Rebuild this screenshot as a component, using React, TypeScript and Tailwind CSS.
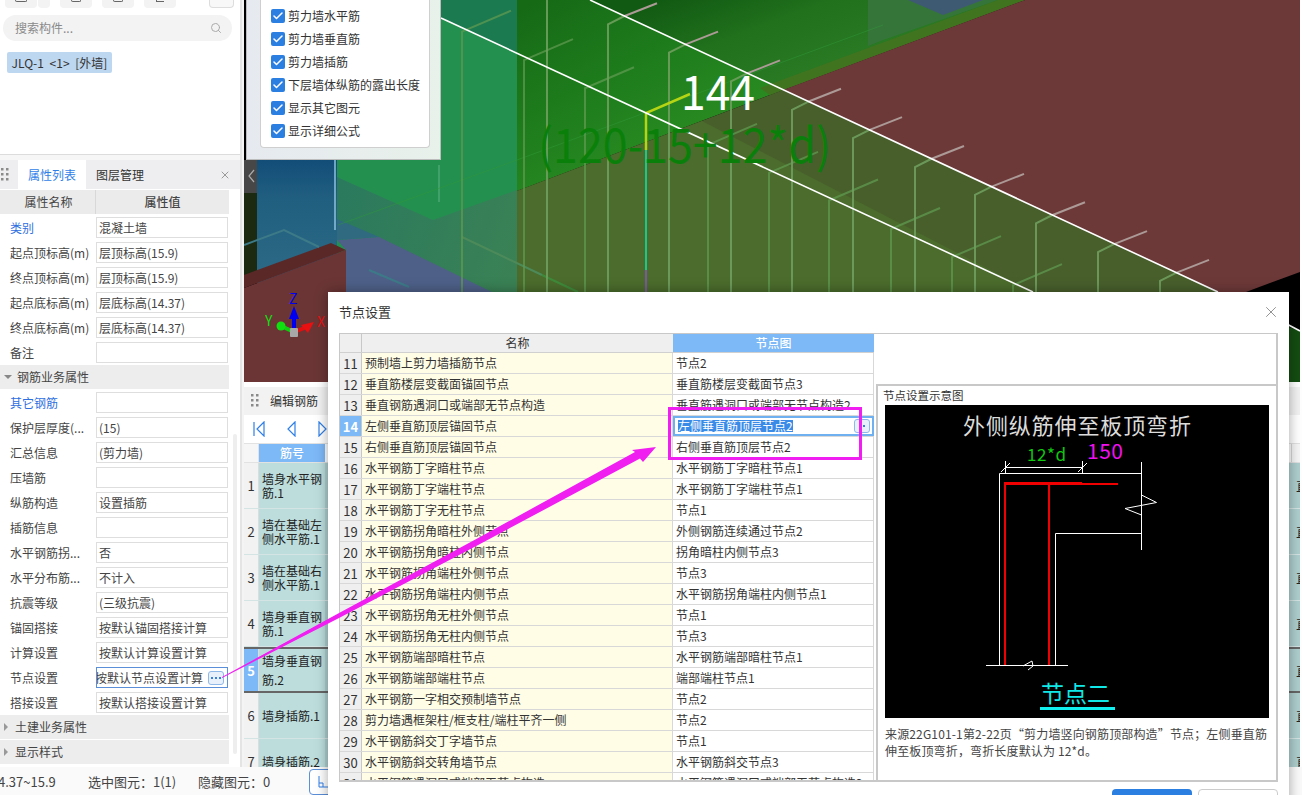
import { Check, Search, X } from "lucide-react";

const seriesA = [549, 610, 671, 733, 794, 855, 917, 977, 1038, 1100, 1162];
const seriesB = [464, 526, 587, 710, 771, 831, 893, 954, 1015];

const props: [string, string, boolean?][] = [
  ["类别", "混凝土墙", true],
  ["起点顶标高(m)", "层顶标高(15.9)"],
  ["终点顶标高(m)", "层顶标高(15.9)"],
  ["起点底标高(m)", "层底标高(14.37)"],
  ["终点底标高(m)", "层底标高(14.37)"],
  ["备注", ""],
];

const rebarProps: [string, string, boolean?][] = [
  ["其它钢筋", "", true],
  ["保护层厚度(...", "(15)"],
  ["汇总信息", "(剪力墙)"],
  ["压墙筋", ""],
  ["纵筋构造", "设置插筋"],
  ["插筋信息", ""],
  ["水平钢筋拐...", "否"],
  ["水平分布筋...", "不计入"],
  ["抗震等级", "(三级抗震)"],
  ["锚固搭接", "按默认锚固搭接计算"],
  ["计算设置", "按默认计算设置计算"],
];

const nodes: [number, string, string][] = [
  [11, "预制墙上剪力墙插筋节点", "节点2"],
  [12, "垂直筋楼层变截面锚固节点", "垂直筋楼层变截面节点3"],
  [13, "垂直钢筋遇洞口或端部无节点构造", "垂直筋遇洞口或端部无节点构造2"],
  [14, "左侧垂直筋顶层锚固节点", "左侧垂直筋顶层节点2"],
  [15, "右侧垂直筋顶层锚固节点", "右侧垂直筋顶层节点2"],
  [16, "水平钢筋丁字暗柱节点", "水平钢筋丁字暗柱节点1"],
  [17, "水平钢筋丁字端柱节点", "水平钢筋丁字端柱节点1"],
  [18, "水平钢筋丁字无柱节点", "节点1"],
  [19, "水平钢筋拐角暗柱外侧节点", "外侧钢筋连续通过节点2"],
  [20, "水平钢筋拐角暗柱内侧节点", "拐角暗柱内侧节点3"],
  [21, "水平钢筋拐角端柱外侧节点", "节点3"],
  [22, "水平钢筋拐角端柱内侧节点", "水平钢筋拐角端柱内侧节点1"],
  [23, "水平钢筋拐角无柱外侧节点", "节点1"],
  [24, "水平钢筋拐角无柱内侧节点", "节点3"],
  [25, "水平钢筋端部暗柱节点", "水平钢筋端部暗柱节点1"],
  [26, "水平钢筋端部端柱节点", "端部端柱节点1"],
  [27, "水平钢筋一字相交预制墙节点", "节点2"],
  [28, "剪力墙遇框架柱/框支柱/端柱平齐一侧", "节点2"],
  [29, "水平钢筋斜交丁字墙节点", "节点1"],
  [30, "水平钢筋斜交转角墙节点", "水平钢筋斜交节点3"],
  [31, "水平钢筋遇洞口或端部无节点构造", "水平钢筋遇洞口或端部无节点构造2"],
];

const rebarRows = [
  { no: 1, name: "墙身水平钢筋.1" },
  { no: 2, name: "墙在基础左侧水平筋.1" },
  { no: 3, name: "墙在基础右侧水平筋.1" },
  { no: 4, name: "墙身垂直钢筋.1" },
  { no: 5, name: "墙身垂直钢筋.2" },
  { no: 6, name: "墙身插筋.1" },
  { no: 7, name: "墙身插筋.2" },
];

const checks = ["剪力墙水平筋", "剪力墙垂直筋", "剪力墙插筋", "下层墙体纵筋的露出长度", "显示其它图元", "显示详细公式"];

const Grip = () => (
  <svg width="8" height="16" viewBox="0 0 8 16" className="shrink-0">
    {[1, 6, 11].map((y) => (
      <g key={y} fill="#8a8a8a">
        <rect x="0" y={y} width="2.5" height="2.5" />
        <rect x="5" y={y} width="2.5" height="2.5" />
      </g>
    ))}
  </svg>
);

const PropRow = ({ label, value, blue }: { label: string; value: string; blue?: boolean }) => (
  <div className="flex h-[25px] items-center">
    <span className={`w-[96px] shrink-0 pl-[10px] whitespace-nowrap ${blue ? "text-[#2f6fe0]" : "text-[#444]"}`}>{label}</span>
    <div className="flex h-[21px] w-[132px] items-center border border-[#dedede] bg-white pl-[2px] whitespace-nowrap text-[#444]">{value}</div>
  </div>
);

const Section = ({ title, open }: { title: string; open?: boolean }) => (
  <div className="mb-px flex h-[24px] items-center gap-[5px] bg-[#ededed] pl-[4px] text-[#444]">
    <span className={`h-0 w-0 border-transparent ${open ? "border-x-[4px] border-t-[4px] border-t-[#888]" : "border-y-[4px] border-l-[4px] border-l-[#999]"}`} />
    <span className={open ? "" : "ml-[2px]"}>{title}</span>
  </div>
);

const Scene = () => (
  <svg viewBox="246 0 1056 382" className="block h-[382px] w-[1056px]">
    <defs>
      <linearGradient id="upper" gradientUnits="userSpaceOnUse" x1="620" y1="-30" x2="680" y2="130">
        <stop offset="0.25" stopColor="#115a13" />
        <stop offset="0.6" stopColor="#20701c" />
        <stop offset="1" stopColor="#2b7a24" />
      </linearGradient>
      <linearGradient id="lower" gradientUnits="userSpaceOnUse" x1="560" y1="-10" x2="660" y2="170">
        <stop offset="0" stopColor="#166a16" />
        <stop offset="0.5" stopColor="#1e7c1c" />
        <stop offset="1" stopColor="#2a8c22" />
      </linearGradient>
      <linearGradient id="wall" gradientUnits="userSpaceOnUse" x1="339" y1="200" x2="519" y2="260">
        <stop offset="0" stopColor="#2b7a5e" />
        <stop offset="1" stopColor="#3a8155" />
      </linearGradient>
      <linearGradient id="blue" gradientUnits="userSpaceOnUse" x1="300" y1="160" x2="300" y2="290">
        <stop offset="0" stopColor="#124d78" />
        <stop offset="0.3" stopColor="#215f80" />
        <stop offset="1" stopColor="#2d6b86" />
      </linearGradient>
    </defs>
    <rect x="246" y="0" width="1056" height="382" fill="#000" />

    <rect x="246" y="193" width="14" height="90" fill="#1c2a12" />
    <rect x="246" y="160" width="16" height="33" fill="#474747" />
    <path d="M256 170 l-5 6 l5 6" fill="none" stroke="#aaa" strokeWidth="1.2" />
    <rect x="259" y="160" width="80" height="125" fill="url(#blue)" />
    <polygon points="339,219 381,237 339,240" fill="#2f6a80" />

    <rect x="339" y="0" width="180" height="292" fill="#23904f" />
    <polygon points="443,18 519,53 519,0 443,0" fill="#1c7a50" />
    <polygon points="339,177 435,220 519,190 519,292 494,292 339,219" fill="url(#wall)" />
    <polygon points="339,240 381,237 494,292 348,292 348,250" fill="#4e6088" />
    <polygon points="339,219 381,237 339,240" fill="#2f6a80" />

    <polygon points="246,288 348,250 348,382 246,382" fill="#6b3535" />
    <polygon points="246,275 333,243 348,250 246,288" fill="#5b2828" />
    <rect x="348" y="292" width="954" height="90" fill="#000" />

    <polygon points="592,0 1027,0 785,90" fill="url(#upper)" />
    <polygon points="870,0 1000,0 885,40 870,46" fill="#36753a" />
    <polygon points="910,0 985,0 945,15" fill="#3e5a72" />
    <polygon points="519,0 592,0 785,90 519,191" fill="url(#lower)" />
    <polygon points="772,95 1027,0 1000,0 762,88" fill="#41741f" />
    <polygon points="785,90 1027,0 1302,0 1302,272 1248,292 1220,292" fill="#6d3838" />
    <polygon points="519,191 785,90 1220,292 519,292" fill="#485f2c" />
    <polygon points="519,191 704,121 1035,292 519,292" fill="#4b6c2c" />
    <polygon points="1285,325 1302,331 1302,382 1285,382" fill="#144d12" />

    <path d="M246 245 L286 230 L321 247" fill="none" stroke="#3d7a88" strokeWidth="2" />
    <path d="M371 270 L411 287" stroke="#3d7a88" strokeWidth="2" />
    <path d="M464 237 L544 275" stroke="#4d8a5a" strokeWidth="2" />
    <path d="M544 275 L580 292" stroke="#3f8a3a" strokeWidth="2" />
    <path d="M337 160 V230" stroke="#8cc0e0" strokeWidth="1.5" />
    <path d="M441 165 V202" stroke="#4ba870" strokeWidth="1.5" />
    <path d="M340 225 L519 160 L885 25" stroke="#2f9a3a" strokeWidth="1" fill="none" opacity="0.5" />

    {seriesB.map((x) => {
      const y = 227 + (x - 893) * 0.46;
      return (
        <g key={x} fill="none" strokeWidth="2">
          <path d={`M${x} 292 V${y + 2} L${x + 49} ${y - 19}`} stroke="#5f9a50" opacity="0.75" />
        </g>
      );
    })}
    {seriesA.map((x) => {
      const y = 165 + (x - 917) * 0.465;
      return (
        <g key={x} fill="none" strokeWidth="2">
          <path d={`M${x} 292 V${y + 2} L${x + 16} ${y - 6}`} stroke="#6f9f5e" opacity="0.9" />
          <path d={`M${x + 16} ${y - 6} L${x + 49} ${y - 19}`} stroke="#ab9a96" />
        </g>
      );
    })}

    <path d="M648 150 V270" stroke="#19c98a" strokeWidth="2" />
    <path d="M648 270 V292" stroke="#7a5a9a" strokeWidth="2" />
    <path d="M648 150 V113 L692 94" fill="none" stroke="#b4d414" strokeWidth="2.5" />

    <path d="M443 18 L1035 292" stroke="#fff" strokeWidth="1.6" />
    <path d="M592 0 L1220 292 M1285 322 L1302 331" stroke="#fff" strokeWidth="1.6" fill="none" />

    <text x="683" y="110" fontSize="48" fill="#fff" textLength="74" lengthAdjust="spacingAndGlyphs">144</text>
    <text x="540" y="163" fontSize="48" fill="#0a800a" textLength="293" lengthAdjust="spacingAndGlyphs">(120-15+12*d)</text>

    <path d="M296 332 L283 326" stroke="#10d010" strokeWidth="4" />
    <circle cx="283" cy="326" r="4.5" fill="#10e010" />
    <path d="M296 332 L309 327" stroke="#e01010" strokeWidth="4" />
    <path d="M303 325 L316 322 L310 333 Z" fill="#e81010" />
    <rect x="294" y="316" width="4" height="14" fill="#0000f0" />
    <path d="M296 306 L291 319 H301 Z" fill="#0000f0" />
    <rect x="292" y="328" width="8" height="9" rx="1" fill="#a8a8a8" />
    <text x="291" y="304" fontSize="14" fill="#0000f0">Z</text>
    <text x="267" y="326" fontSize="14" fill="#10e010">Y</text>
    <text x="319" y="327" fontSize="14" fill="#e81010">X</text>
  </svg>
);

const Preview = () => (
  <svg viewBox="885 405 384 313" className="block h-[313px] w-[384px] bg-black">
    <text x="963" y="434" fontSize="22" fill="#dcdcdc" textLength="228">外侧纵筋伸至板顶弯折</text>
    <text x="1027" y="461" fontSize="17" fill="#10c810" textLength="39">12*d</text>
    <text x="1087" y="459" fontSize="21" fill="#f010f0" textLength="36">150</text>
    <g fill="none" stroke="#fff" strokeWidth="1">
      <path d="M1141.5 462 V550 M999.5 665 V473.5 H1141.5 M1055.5 665 V533.5 H1141.5" />
      <path d="M986 665.5 H1068" />
      <path d="M1005.5 461 V473 M1082.5 461 V473 M1005.5 467.5 H1082.5 M1001 472 L1010 463 M1078 472 L1087 463" />
      <path d="M1141.5 495 L1156.5 502.5 L1125 508.5 L1141.5 515" />
      <path d="M1023 666 L1032 661 L1033 666 L1028 670" />
    </g>
    <path d="M1005 665 V483 H1082 M1005 484 H1118 M1049 483.5 V665" fill="none" stroke="#f00000" strokeWidth="2" />
    <text x="1041" y="702" fontSize="23" fill="#10e8e8" textLength="69">节点二</text>
    <rect x="1040" y="707" width="75" height="3" fill="#10f0f0" />
  </svg>
);

const Dots = ({ n }: { n: number }) => (
  <span className="flex h-[14px] w-[16px] shrink-0 items-center justify-center gap-[2px] rounded-[3px] border border-[#8db8e8] bg-[#e8f1fb]">
    {Array.from({ length: n }).map((_, i) => (
      <span key={i} className="h-[2px] w-[2px] bg-[#3a7fd8]" />
    ))}
  </span>
);

export default function App() {
  return (
    <div className="relative flex h-[795px] w-[1302px] flex-col overflow-hidden bg-white font-['Noto_Sans_CJK_SC','Noto_Sans',sans-serif] text-[12px] leading-none text-[#333]">
      <div className="flex h-[767px] overflow-hidden">
        {/* left column */}
        <div className="flex w-[242px] shrink-0 flex-col border-r-2 border-[#e4e4e4] bg-white">
          <div className="h-[155px] shrink-0 border-b border-[#dcdcdc]">
            <div className="flex h-[8px] gap-[1px] pl-[5px]">
              <div className="flex h-[8px] w-[32px] justify-center rounded-b bg-[#f3f3f3]"><span className="h-[2px] w-[12px] rounded-b border-x border-b border-[#666]" /></div>
              <div className="mr-[9px] h-[8px] w-[12px] rounded-b bg-[#f3f3f3]" />
              <div className="mr-[9px] flex h-[8px] w-[32px] justify-center rounded-b bg-[#f3f3f3]"><span className="h-[2px] w-[10px] rounded-b border-x border-b border-[#666]" /></div>
              <div className="mr-[9px] flex h-[8px] w-[32px] justify-center rounded-b bg-[#f3f3f3]"><span className="h-[2px] w-[10px] rounded-b border-x border-b border-[#666]" /></div>
              <div className="flex h-[8px] w-[32px] justify-center rounded-b bg-[#f3f3f3]"><span className="h-[2px] w-[8px] border-b border-l border-[#666]" /></div>
              <div className="ml-[32px] h-[8px] w-[25px] rounded-b border border-t-0 border-[#ddd] bg-[#f8f8f8]" />
            </div>
            <div className="mx-[3px] mt-[7px] flex h-[26px] w-[229px] items-center justify-between rounded-full bg-[#f3f3f3] pl-[12px] pr-[10px] text-[#8a8a8a]">
              <span>搜索构件...</span>
              <Search size={12} className="text-[#aaa]" />
            </div>
            <div className="ml-[7px] mt-[11px] flex h-[21px] w-[105px] items-center justify-center rounded-[2px] bg-[#bdd7f0] whitespace-nowrap text-[#333] [word-spacing:3px]">JLQ-1 &lt;1&gt; [外墙]</div>
          </div>

          <div className="flex h-[5px] shrink-0 bg-[#f6f6f6]" />

          <div className="flex h-[29px] shrink-0 items-center bg-[#eeeef0]">
            <div className="flex h-full w-[18px] items-center pl-[1px]"><Grip /></div>
            <div className="flex h-full w-[68px] items-center justify-center bg-white text-[#2f7fe8]">属性列表</div>
            <span className="ml-[10px]">图层管理</span>
            <X size={12} className="ml-auto mr-[9px] text-[#999]" />
          </div>

          <div className="flex min-h-0 flex-1">
            <div className="w-[229px] shrink-0">
              <div className="mt-[1px] mb-[1px] flex h-[24px] bg-[#ebebeb] text-[#444]">
                <span className="flex w-[96px] items-center justify-center border-r border-[#d8d8d8] pl-[2px]">属性名称</span>
                <span className="flex flex-1 items-center justify-center font-medium">属性值</span>
              </div>
              {props.map(([l, v, b]) => (
                <PropRow key={l} label={l} value={v} blue={b} />
              ))}
              <Section title="钢筋业务属性" open />
              {rebarProps.map(([l, v, b]) => (
                <PropRow key={l} label={l} value={v} blue={b} />
              ))}
              <div className="flex h-[25px] items-center">
                <span className="w-[96px] shrink-0 pl-[10px] text-[#444]">节点设置</span>
                <div className="flex h-[21px] w-[132px] items-center overflow-hidden border border-[#5b8fd8] bg-white text-[#444]">
                  <span className="-ml-[2px] shrink-0 whitespace-nowrap pr-[5px]">按默认节点设置计算</span>
                  <Dots n={3} />
                </div>
              </div>
              <PropRow label="搭接设置" value="按默认搭接设置计算" />
              <Section title="土建业务属性" />
              <Section title="显示样式" />
            </div>
            <div className="flex-1 pt-[245px]">
              <div className="ml-[4px] h-[320px] w-[4px] rounded-full bg-[#eeeeee]" />
            </div>
          </div>
        </div>

        <div className="w-[2px] shrink-0 bg-[#f4f4f4]" />

        {/* main column */}
        <div className="flex w-[1056px] flex-col overflow-hidden">
          <div className="relative h-[382px] shrink-0">
            <Scene />
            <div className="absolute left-[2px] top-0 h-[160px] w-[195px] border border-t-0 border-[#bcbcbc] bg-gradient-to-r from-[#e6eaf0] to-[#e8f1ea] pl-[13px]">
              <div className="flex h-[148px] w-[170px] flex-col rounded-b border border-t-0 border-[#cfcfcf] bg-white pl-[10px] pt-[4px]">
                {checks.map((c) => (
                  <div key={c} className="flex h-[23px] items-center gap-[3px]">
                    <span className="flex h-[14px] w-[14px] items-center justify-center rounded-[2px] bg-[#2b7fe0]"><Check size={12} strokeWidth={3} className="text-white" /></span>
                    <span className="whitespace-nowrap">{c}</span>
                  </div>
                ))}
              </div>
            </div>
          </div>

          <div className="mt-[5px] flex h-[28px] shrink-0 items-center gap-[11px] bg-[#f2f2f2] pl-[7px]">
            <Grip />
            <span>编辑钢筋</span>
          </div>
          <div className="flex h-[28px] shrink-0 items-center pl-[9px]">
            <svg width="74" height="16" viewBox="0 0 74 16" fill="none" stroke="#2f7fe8" strokeWidth="1.2">
              <path d="M1 1 V15 M11 1 L4 8 L11 15 Z" />
              <path d="M42 1 L35 8 L42 15 Z" />
              <path d="M66 1 L73 8 L66 15 Z" />
            </svg>
          </div>
          <div className="grid h-[20px] shrink-0 grid-cols-[15px_66px_1fr] border-y border-[#e2e2e2]">
            <span className="border-r border-[#e2e2e2] bg-[#f6f6f6]" />
            <span className="flex items-center justify-center bg-[#7db8f7] font-medium text-white">筋号</span>
            <span className="ml-[966px] border-l border-[#d8d8d8] bg-[#f6f6f6]" />
          </div>
          {rebarRows.map((r) => (
            <div key={r.no} className={`grid h-[46px] shrink-0 grid-cols-[15px_66px_1fr] overflow-hidden ${r.no === 5 ? "border-y-2 border-[#666]" : "border-b border-[#d4e4e4]"}`}>
              <span className={`flex items-center justify-center border-r border-[#dcdcdc] text-[13px] ${r.no === 5 ? "bg-[#7db8f7] font-bold text-white" : "bg-[#f2f2f2]"}`}>{r.no}</span>
              <span className={`flex items-center bg-[#bddddd] px-[3px] text-[#222] ${r.no === 5 ? "leading-[19px]" : "leading-[14px]"}`}>{r.name}</span>
              <span className="flex items-center justify-end overflow-hidden bg-[#aecece] text-[13px] text-[#222]"><span className="-mr-[9px]">直</span></span>
            </div>
          ))}
        </div>
      </div>

      {/* status bar */}
      <div className="flex h-[28px] shrink-0 items-center bg-[#fafafa] text-[13px] text-[#444]">
        <span className="-ml-[2px] w-[90px]">4.37~15.9</span>
        <span className="w-[110px] whitespace-nowrap">选中图元：1(1)</span>
        <span className="w-[111px] whitespace-nowrap">隐藏图元：0</span>
        <span className="mt-[2px] flex h-[26px] w-[30px] items-center justify-center rounded border border-[#5b8fd8] bg-white">
          <svg width="14" height="14" viewBox="0 0 14 14" fill="none" stroke="#2f7fe8"><path d="M2 1 V12 H13 M2 8 H6 V12" /></svg>
        </span>
      </div>

      {/* dialog */}
      <div className="absolute left-[328px] top-[292px] flex h-[530px] w-[961px] flex-col bg-white shadow-[0_0_12px_rgba(0,0,0,0.35)]">
        <div className="flex h-[41px] shrink-0 items-center justify-between pb-[2px] pl-[11px] pr-[9px] text-[13px]">
          <span>节点设置</span>
          <X size={18} strokeWidth={1.2} className="text-[#888]" />
        </div>
        <div className="ml-[11px] flex h-[449px] w-[939px] shrink-0 overflow-hidden border-b-2 border-l border-r-2 border-t border-[#c8c8c8]">
          <div className="w-[534px] shrink-0 overflow-hidden">
            <div className="grid h-[19px] grid-cols-[22px_311px_201px] border-b border-[#d0d0d0]">
              <span className="border-r border-[#c8c8c8] bg-[#efefef]" />
              <span className="flex items-center justify-center bg-[#efefef]">名称</span>
              <span className="flex items-center justify-center bg-[#7db8f7] font-medium text-white">节点图</span>
            </div>
            {nodes.map(([n, name, node]) => (
              <div key={n} className="grid h-[21px] grid-cols-[22px_311px_201px] border-b border-[#d8d8d8]">
                <span className={`flex items-center justify-center border-r border-[#c8c8c8] text-[13px] ${n === 14 ? "bg-[#7db8f7] font-bold text-white" : "bg-[#efefef]"}`}>{n}</span>
                <span className="flex items-center whitespace-nowrap border-r border-[#d8d8d8] bg-[#fffde6] pl-[3px]">{name}</span>
                {n === 14 ? (
                  <span className="flex items-center justify-between border-2 border-[#6fb0f0] pl-[3px] pr-[2px]">
                    <span className="bg-[#3a8ae8] text-white">{node}</span>
                    <Dots n={2} />
                  </span>
                ) : (
                  <span className="flex items-center whitespace-nowrap border-r border-[#d8d8d8] pl-[3px]">{node}</span>
                )}
              </div>
            ))}
          </div>
          <div className="flex min-w-0 flex-1 flex-col pl-[2px]">
            <div className="h-[50px] shrink-0" />
            <div className="flex-1 border-l-2 border-t-2 border-[#c8c8c8] pl-[7px]">
              <div className="-ml-[2px] flex h-[19px] items-center text-[11.5px]">节点设置示意图</div>
              <Preview />
              <p className="mt-[7px] w-[386px] text-[12px] leading-[17px] tracking-[0.15px] text-[#444]">来源22G101-1第2-22页“剪力墙竖向钢筋顶部构造”节点；左侧垂直筋伸至板顶弯折，弯折长度默认为 12*d。</p>
            </div>
          </div>
        </div>
        <div className="mr-[11px] mt-[7px] flex justify-end gap-[6px]">
          <span className="flex h-[30px] w-[80px] items-center justify-center rounded bg-[#2b7fe0] text-white">确定</span>
          <span className="flex h-[30px] w-[80px] items-center justify-center rounded border border-[#ccc]">取消</span>
        </div>
      </div>

      {/* annotation */}
      <svg className="pointer-events-none absolute left-0 top-0" width="1302" height="795" viewBox="0 0 1302 795">
        <polygon points="222,677 340,612.5 480,537 635,452 632,450 656,447 643,462 640,458.5 480,544 340,617.5 222,678" fill="#f01ef0" />
        <rect x="669.5" y="408.5" width="191" height="50" fill="none" stroke="#f01ef0" strokeWidth="3" />
      </svg>
    </div>
  );
}
